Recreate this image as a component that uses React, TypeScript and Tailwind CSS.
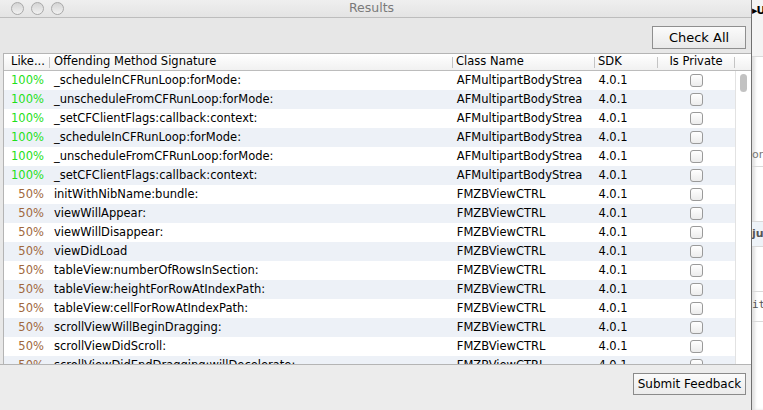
import React from "react";

type Row = { like: string; sig: string; cls: string };

const rows: Row[] = [
  { like: "100%", sig: "_scheduleInCFRunLoop:forMode:", cls: "AFMultipartBodyStrea" },
  { like: "100%", sig: "_unscheduleFromCFRunLoop:forMode:", cls: "AFMultipartBodyStrea" },
  { like: "100%", sig: "_setCFClientFlags:callback:context:", cls: "AFMultipartBodyStrea" },
  { like: "100%", sig: "_scheduleInCFRunLoop:forMode:", cls: "AFMultipartBodyStrea" },
  { like: "100%", sig: "_unscheduleFromCFRunLoop:forMode:", cls: "AFMultipartBodyStrea" },
  { like: "100%", sig: "_setCFClientFlags:callback:context:", cls: "AFMultipartBodyStrea" },
  { like: "50%", sig: "initWithNibName:bundle:", cls: "FMZBViewCTRL" },
  { like: "50%", sig: "viewWillAppear:", cls: "FMZBViewCTRL" },
  { like: "50%", sig: "viewWillDisappear:", cls: "FMZBViewCTRL" },
  { like: "50%", sig: "viewDidLoad", cls: "FMZBViewCTRL" },
  { like: "50%", sig: "tableView:numberOfRowsInSection:", cls: "FMZBViewCTRL" },
  { like: "50%", sig: "tableView:heightForRowAtIndexPath:", cls: "FMZBViewCTRL" },
  { like: "50%", sig: "tableView:cellForRowAtIndexPath:", cls: "FMZBViewCTRL" },
  { like: "50%", sig: "scrollViewWillBeginDragging:", cls: "FMZBViewCTRL" },
  { like: "50%", sig: "scrollViewDidScroll:", cls: "FMZBViewCTRL" },
  { like: "50%", sig: "scrollViewDidEndDragging:willDecelerate:", cls: "FMZBViewCTRL" },
];

const font = { fontFamily: '"DejaVu Sans", "Liberation Sans", sans-serif' };

function Light() {
  return (
    <div className="w-[13px] h-[13px] rounded-full border border-[#a9a9a9] bg-gradient-to-b from-[#d4d4d4] to-[#f2f2f2]" />
  );
}

function Check() {
  return (
    <div className="w-[13px] h-[13px] rounded-[3px] border border-[#9a9a9a] bg-gradient-to-b from-[#ffffff] to-[#ececec]" />
  );
}

function HeaderDivider() {
  return <div className="w-px h-[11px] bg-[#c4c4c4]" />;
}

export default function App() {
  return (
    <div className="w-[763px] h-[410px] flex bg-white overflow-hidden text-black" style={font}>
      {/* Results window */}
      <div className="w-[751px] h-full flex flex-col bg-[#e8e8e8] shrink-0">
        {/* title bar */}
        <div className="h-[18px] flex items-center relative bg-gradient-to-b from-[#efefef] to-[#e4e4e4] border-b border-[#bdbdbd]">
          <div className="flex gap-[7px] pl-[11px]">
            <Light />
            <Light />
            <Light />
          </div>
          <div className="flex-1 text-center text-[12.5px] text-[#7a7a7a] pr-[72px] leading-none">Results</div>
        </div>

        {/* toolbar */}
        <div className="h-[35px] flex items-start justify-end pr-[5px] pt-[8px] bg-[#e7e7e7]">
          <button className="w-[94px] h-[23px] border border-[#8f8f8f] bg-gradient-to-b from-[#fbfbfb] to-[#e9e9e9] text-[13px] leading-none whitespace-nowrap">
            Check All
          </button>
        </div>

        {/* table */}
        <div className="h-[311px] ml-[3px] flex flex-col bg-white border-t border-l border-[#b4b4b4] overflow-hidden">
          <div className="h-[17px] flex items-center bg-gradient-to-b from-[#ffffff] to-[#f1f1f1] border-b border-[#bcbcbc] text-[11.5px] shrink-0">
            <div className="w-[46px] pl-[7px] flex items-center justify-between pr-0">
              <span>Like...</span>
              <HeaderDivider />
            </div>
            <div className="w-[403px] pl-[4px] flex items-center justify-between">
              <span>Offending Method Signature</span>
              <HeaderDivider />
            </div>
            <div className="w-[142px] pl-[3px] flex items-center justify-between">
              <span>Class Name</span>
              <HeaderDivider />
            </div>
            <div className="w-[63px] pl-[3px] flex items-center justify-between">
              <span>SDK</span>
              <HeaderDivider />
            </div>
            <div className="w-[77px] flex items-center">
              <span className="flex-1 text-center">Is Private</span>
              <HeaderDivider />
            </div>
            <div className="flex-1" />
          </div>
          <div className="flex flex-1 overflow-hidden">
            <div className="flex-1 flex flex-col overflow-hidden">
              {rows.map((r, i) => (
                <div
                  key={i}
                  className={`h-[19px] shrink-0 flex items-center text-[11.5px] ${i % 2 === 1 ? "bg-[#edf1f7]" : "bg-white"}`}
                >
                  <div
                    className={`w-[40px] text-right ${r.like === "100%" ? "text-[#1fe01a]" : "text-[#a0683c]"}`}
                  >
                    {r.like}
                  </div>
                  <div className="w-[411px] pl-[10px] whitespace-nowrap overflow-hidden">{r.sig}</div>
                  <div className="w-[142px] pl-[3px] whitespace-nowrap overflow-hidden">{r.cls}</div>
                  <div className="w-[63px] pl-[3px]">4.0.1</div>
                  <div className="w-[77px] flex justify-center pr-[1px]">
                    <Check />
                  </div>
                </div>
              ))}
            </div>
            {/* scroller */}
            <div className="w-[16px] shrink-0 bg-white border-l border-[#e2e2e2] flex justify-center pt-[3px]">
              <div className="w-[7px] h-[18px] rounded-full bg-[#c2c2c2]" />
            </div>
          </div>
        </div>

        {/* bottom bar */}
        <div className="flex-1 border-t border-[#b4b4b4] bg-[#ececec] flex items-start justify-end pr-[5px] pt-[8px]">
          <button className="w-[113px] h-[22px] border border-[#8a8a8a] bg-gradient-to-b from-[#fbfbfb] to-[#ebebeb] text-[12px] leading-none whitespace-nowrap">
            Submit Feedback
          </button>
        </div>
      </div>

      {/* background window edge */}
      <div className="flex-1 h-full flex flex-col border-l border-[#6f6f6f] bg-white overflow-hidden shadow-[inset_3px_0_3px_rgba(0,0,0,0.12)]">
        <div className="h-[57px] border-b border-[#dadada] bg-[#f4f4f4] pt-[3px] text-[11px] font-bold whitespace-nowrap tracking-[-1px]">▸U</div>
        <div className="h-[110px] border-b border-[#dadada] flex items-end pb-[3px] text-[11px] text-[#777] whitespace-nowrap">ont</div>
        <div className="h-[55px] border-b border-[#dadada]" />
        <div className="h-[25px] bg-[#eef3f8] border-b border-[#dadada] text-[11px] font-bold text-[#555] whitespace-nowrap pt-[4px]">jue</div>
        <div className="h-[45px] border-b border-[#dadada]" />
        <div className="h-[30px] border-b border-[#dadada] text-[11px] text-[#555] whitespace-nowrap pt-[5px]" style={{ fontFamily: '"DejaVu Sans Mono", monospace' }}>it</div>
      </div>
    </div>
  );
}
